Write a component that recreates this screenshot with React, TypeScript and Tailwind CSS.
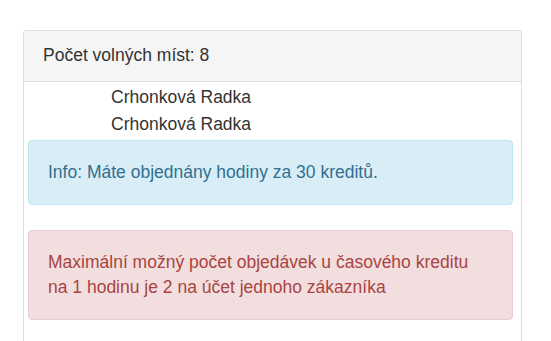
export default function App() {
  return (
    <div className="min-h-[341px] bg-white pt-[30px] pl-[23px] font-['Liberation_Sans',Arial,sans-serif] text-[17.5px] text-[#333]">
      <div className="w-[499px] rounded-t-[4px] border border-b-0 border-[#ddd] bg-white">
        <div className="h-[51px] border-b border-[#ddd] bg-[#f5f5f5] px-[19px] pt-[12px] leading-[25px] rounded-t-[4px]">
          Počet volných míst: 8
        </div>
        <div className="px-[4px] pb-[40px]">
          <div className="pl-[83px] pt-[2px] leading-[27px]">
            <div>Crhonková Radka</div>
            <div>Crhonková Radka</div>
          </div>
          <div className="mt-[2px] mr-[4px] rounded-[4px] border border-[#bce8f1] bg-[#d9edf7] px-[19px] py-[19px] leading-[25px] text-[#31708f]">
            Info: Máte objednány hodiny za 30 kreditů.
          </div>
          <div className="mt-[25px] mr-[4px] rounded-[4px] border border-[#ebccd1] bg-[#f2dede] px-[19px] py-[19px] leading-[25px] text-[#a94442]">
            Maximální možný počet objedávek u časového kreditu
            <br />
            na 1 hodinu je 2 na účet jednoho zákazníka
          </div>
        </div>
      </div>
    </div>
  )
}
